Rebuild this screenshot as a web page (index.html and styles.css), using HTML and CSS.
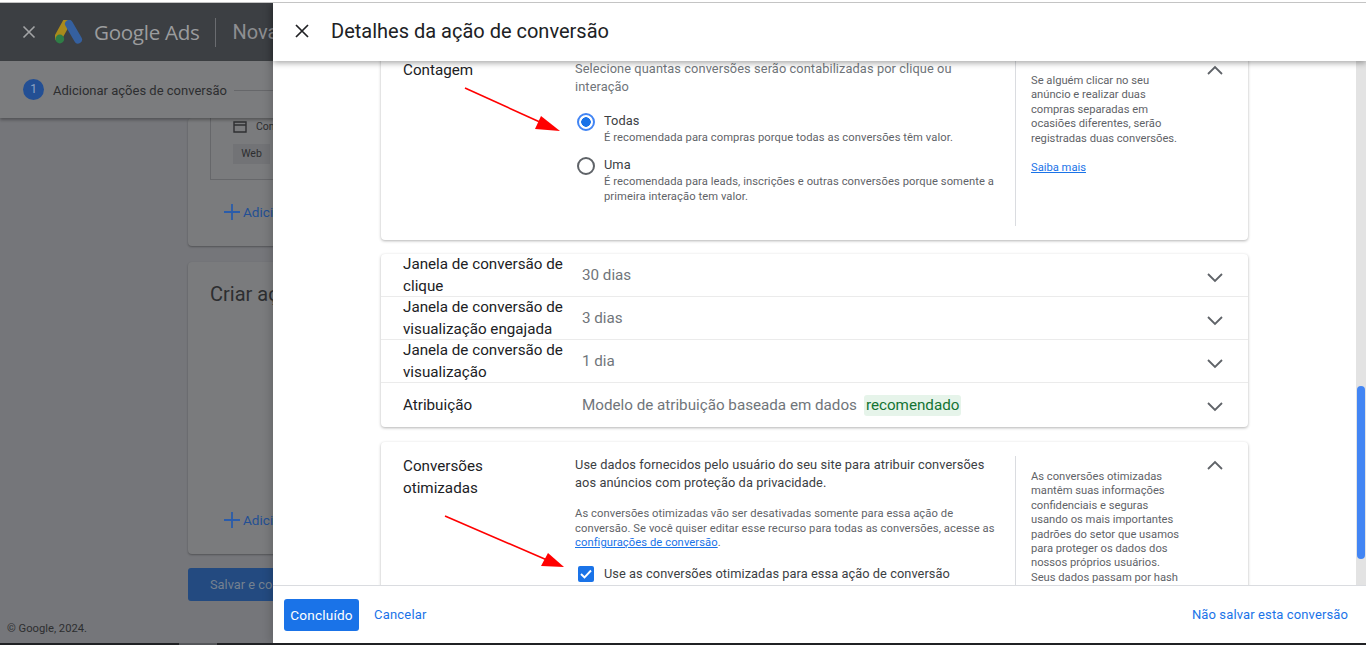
FILE: index.html
```html
<!DOCTYPE html>
<html lang="pt-BR">
<head>
    <meta charset="UTF-8">
    <title>Detalhes da ação de conversão</title>
    <link rel="stylesheet" href="styles.css">
</head>
<body>
    <div class="top-strip"></div>
    <div class="app">
        <!-- pagina escurecida atras do painel -->
        <div class="bg-page">
            <header class="bg-header">
                <svg class="bg-close" width="14" height="14" viewBox="0 0 14 14"><path d="M1.5 1.5l11 11M12.5 1.5l-11 11" stroke="#a3a4a6" stroke-width="1.6" fill="none"/></svg>
                <svg class="bg-logo" width="28" height="24" viewBox="0 0 28 24">
                    <path d="M11.5 2.5L3.5 17" stroke="#a98a1c" stroke-width="8" stroke-linecap="round" fill="none"/>
                    <path d="M14 4l9 15.5" stroke="#35609f" stroke-width="8" stroke-linecap="round" fill="none"/>
                    <circle cx="4.8" cy="19" r="4.4" fill="#2f7d46"/>
                </svg>
                <span class="bg-brand">Google Ads</span>
                <span class="bg-title">Nova ação de conversão</span>
            </header>
            <div class="bg-stepper">
                <span class="step-num">1</span>
                <span class="step-text">Adicionar ações de conversão</span>
                <span class="step-line"></span>
            </div>
            <div class="bg-content">
                <section class="bg-card bg-card-one">
                    <div class="bg-inner">
                        <div class="bg-inner-row">
                            <svg width="14" height="12" viewBox="0 0 14 12"><path d="M1 1h12v10H1zM1 4h12" stroke="#2f3032" stroke-width="1.4" fill="none"/></svg>
                            <span>Compras</span>
                        </div>
                        <span class="bg-chip">Web</span>
                    </div>
                    <div class="bg-add">
                        <svg width="16" height="16" viewBox="0 0 16 16"><path d="M8 0v16M0 8h16" stroke="#2a5cab" stroke-width="1.8" fill="none"/></svg>
                        Adicionar
                    </div>
                </section>
                <section class="bg-card bg-card-two">
                    <h3>Criar ações de conversão</h3>
                    <div class="bg-add">
                        <svg width="16" height="16" viewBox="0 0 16 16"><path d="M8 0v16M0 8h16" stroke="#2a5cab" stroke-width="1.8" fill="none"/></svg>
                        Adicionar
                    </div>
                </section>
                <div class="bg-save">Salvar e continuar</div>
            </div>
            <div class="bg-foot">© Google, 2024.</div>
        </div>

        <!-- painel lateral -->
        <aside class="panel">
            <header class="panel-head">
                <svg width="14" height="14" viewBox="0 0 14 14"><path d="M1 1l12 12M13 1L1 13" stroke="#202124" stroke-width="1.7" fill="none"/></svg>
                <h1>Detalhes da ação de conversão</h1>
            </header>
            <div class="panel-body">
                <div class="scroll">
                    <section class="card card-open card-count">
                        <h2 class="card-title">Contagem</h2>
                        <div class="card-main">
                            <p class="lead lead-muted">Selecione quantas conversões serão contabilizadas por clique ou interação</p>
                            <div class="option option-first">
                                <span class="radio radio-on"></span>
                                <div>
                                    <div class="option-name">Todas</div>
                                    <div class="option-desc">É recomendada para compras porque todas as conversões têm valor.</div>
                                </div>
                            </div>
                            <div class="option">
                                <span class="radio"></span>
                                <div>
                                    <div class="option-name">Uma</div>
                                    <div class="option-desc">É recomendada para leads, inscrições e outras conversões porque somente a primeira interação tem valor.</div>
                                </div>
                            </div>
                        </div>
                        <div class="card-help">
                            <p>Se alguém clicar no seu anúncio e realizar duas compras separadas em ocasiões diferentes, serão registradas duas conversões.</p>
                            <a href="#" class="help-link">Saiba mais</a>
                        </div>
                        <svg class="chev chev-open" width="18" height="10" viewBox="0 0 18 10"><path d="M2 9l7-7 7 7" stroke="#5f6368" stroke-width="1.8" fill="none"/></svg>
                    </section>

                    <div class="rows">
                        <div class="row">
                            <h2 class="card-title">Janela de conversão de clique</h2>
                            <span class="row-value">30 dias</span>
                            <svg class="chev" width="18" height="10" viewBox="0 0 18 10"><path d="M2 1l7 7 7-7" stroke="#5f6368" stroke-width="1.8" fill="none"/></svg>
                        </div>
                        <div class="row">
                            <h2 class="card-title">Janela de conversão de visualização engajada</h2>
                            <span class="row-value">3 dias</span>
                            <svg class="chev" width="18" height="10" viewBox="0 0 18 10"><path d="M2 1l7 7 7-7" stroke="#5f6368" stroke-width="1.8" fill="none"/></svg>
                        </div>
                        <div class="row">
                            <h2 class="card-title">Janela de conversão de visualização</h2>
                            <span class="row-value">1 dia</span>
                            <svg class="chev" width="18" height="10" viewBox="0 0 18 10"><path d="M2 1l7 7 7-7" stroke="#5f6368" stroke-width="1.8" fill="none"/></svg>
                        </div>
                        <div class="row row-last">
                            <h2 class="card-title">Atribuição</h2>
                            <span class="row-value">Modelo de atribuição baseada em dados</span>
                            <span class="tag">recomendado</span>
                            <svg class="chev" width="18" height="10" viewBox="0 0 18 10"><path d="M2 1l7 7 7-7" stroke="#5f6368" stroke-width="1.8" fill="none"/></svg>
                        </div>
                    </div>

                    <section class="card card-open card-enhanced">
                        <h2 class="card-title">Conversões otimizadas</h2>
                        <div class="card-main">
                            <p class="lead">Use dados fornecidos pelo usuário do seu site para atribuir conversões aos anúncios com proteção da privacidade.</p>
                            <p class="note">As conversões otimizadas vão ser desativadas somente para essa ação de conversão. Se você quiser editar esse recurso para todas as conversões, acesse as <a href="#" class="help-link">configurações de conversão</a>.</p>
                            <div class="check-line">
                                <span class="check">
                                    <svg width="12" height="10" viewBox="0 0 12 10"><path d="M1 5l3.5 3.5L11 1.5" stroke="#fff" stroke-width="1.9" fill="none"/></svg>
                                </span>
                                <span class="option-name">Use as conversões otimizadas para essa ação de conversão</span>
                            </div>
                        </div>
                        <div class="card-help">
                            <p>As conversões otimizadas mantêm suas informações confidenciais e seguras usando os mais importantes padrões do setor que usamos para proteger os dados dos nossos próprios usuários. Seus dados passam por hash</p>
                        </div>
                        <svg class="chev chev-open" width="18" height="10" viewBox="0 0 18 10"><path d="M2 9l7-7 7 7" stroke="#5f6368" stroke-width="1.8" fill="none"/></svg>
                    </section>
                </div>
                <div class="scrollbar"><div class="thumb"></div></div>
            </div>
            <footer class="panel-foot">
                <button class="btn-done">Concluído</button>
                <a href="#" class="foot-link">Cancelar</a>
                <a href="#" class="foot-link foot-right">Não salvar esta conversão</a>
            </footer>
        </aside>

        <!-- setas vermelhas da anotacao -->
        <svg class="arrows" width="1366" height="640" viewBox="0 0 1366 640">
            <path d="M465 85L542 120" stroke="#f00" stroke-width="1.6" fill="none"/>
            <path d="M560 128L541 113L535 126Z" fill="#f00"/>
            <path d="M445 513L547 557" stroke="#f00" stroke-width="1.6" fill="none"/>
            <path d="M564 564L548 550L541 563Z" fill="#f00"/>
        </svg>
    </div>
    <div class="bottom-strip"><span class="bottom-tab"></span></div>
</body>
</html>
```

FILE: styles.css
```css
* {
    box-sizing: border-box;
}
html, body {
    margin: 0;
    height: 645px;
    overflow: hidden;
}
body {
    font-family: Roboto, "Liberation Sans", Arial, sans-serif;
    display: flex;
    flex-direction: column;
    color: #202124;
}
h1, h2, h3, p {
    margin: 0;
    font-weight: 400;
}
.top-strip {
    height: 3px;
    background: #fff;
    border-bottom: 1px solid #c4c4c4;
}
.bottom-strip {
    height: 2px;
    background: #202124;
    padding-left: 179px;
}
.bottom-tab {
    display: block;
    width: 38px;
    height: 2px;
    background: #55575a;
}
.app {
    position: relative;
    flex: 1;
    overflow: hidden;
}

/* fundo */
.bg-page {
    height: 100%;
    background: #75767a;
}
.bg-header {
    height: 58px;
    background: #3c3f43;
    display: flex;
    align-items: center;
    padding-left: 22px;
}
.bg-close {
    margin-right: 19px;
}
.bg-logo {
    margin-right: 11px;
}
.bg-brand {
    font-family: "Open Sans", Roboto, sans-serif;
    font-size: 20.6px;
    color: #9b9c9e;
    letter-spacing: -0.3px;
    padding-right: 16px;
    border-right: 1px solid #6a6c70;
    line-height: 29px;
}
.bg-title {
    font-size: 20px;
    color: #8d8e91;
    margin-left: 16px;
    white-space: nowrap;
}
.bg-stepper {
    height: 57px;
    padding: 2px 0 0 23px;
    background: #7b7c7e;
    display: flex;
    align-items: center;
    box-shadow: 0 2px 3px #0000004d;
    position: relative;
}
.step-num {
    width: 21px;
    height: 21px;
    margin-top: -2px;
    border-radius: 50%;
    background: #234f94;
    color: #8ea3c4;
    font-size: 12px;
    text-align: center;
    line-height: 21px;
    margin-right: 9px;
}
.step-text {
    font-size: 13px;
    color: #2d2e30;
}
.step-line {
    width: 60px;
    height: 1px;
    background: #66676a;
    margin-left: 7px;
}
.bg-content {
    padding-left: 188px;
}
.bg-card {
    width: 400px;
    background: #7a7b7d;
    border-radius: 4px;
    box-shadow: 0 1px 2px #0000004d;
    padding-left: 22px;
}
.bg-card-one {
    height: 128px;
    margin-bottom: 16px;
}
.bg-card-two {
    height: 292px;
    margin-bottom: 14px;
    padding-top: 20px;
}
.bg-card-two h3 {
    font-size: 20px;
    color: #2d2e30;
    white-space: nowrap;
}
.bg-card-two .bg-add {
    margin-top: 204px;
}
.bg-inner {
    height: 62px;
    border-left: 1px solid #66676a;
    border-bottom: 1px solid #66676a;
    padding: 2px 0 0 22px;
}
.bg-inner-row {
    display: flex;
    align-items: center;
    gap: 9px;
    font-size: 10.5px;
    color: #2d2e30;
}
.bg-chip {
    display: inline-block;
    margin-top: 11px;
    width: 37px;
    height: 20px;
    background: #727376;
    font-size: 10.5px;
    line-height: 20px;
    text-align: center;
    color: #2d2e30;
}
.bg-add {
    margin: 22px 0 0 14px;
    font-size: 13.6px;
    line-height: 20px;
    color: #234f94;
    display: flex;
    align-items: center;
    gap: 3px;
}
.bg-save {
    width: 400px;
    height: 33px;
    background: #234a80;
    border-radius: 3px;
    font-size: 12.8px;
    line-height: 33px;
    padding-left: 22px;
    color: #75818f;
}
.bg-foot {
    font-size: 11.2px;
    padding: 21px 0 0 7px;
    color: #2d2e30;
}

/* painel */
.panel {
    position: absolute;
    top: 0;
    bottom: 0;
    left: 273px;
    right: 0;
    background: #fff;
    display: flex;
    flex-direction: column;
    box-shadow: -3px 0 8px #00000026;
}
.panel-head {
    height: 58px;
    flex-shrink: 0;
    display: flex;
    align-items: center;
    padding: 0 0 2px 22px;
    gap: 22px;
    background: #fff;
    box-shadow: 0 2px 6px #00000059;
    position: relative;
    z-index: 2;
}
.panel-head h1 {
    font-size: 20px;
    color: #202124;
}
.panel-body {
    flex: 1;
    min-height: 0;
    display: flex;
}
.scroll {
    flex: 1;
    min-width: 0;
    overflow: hidden;
    padding-left: 108px;
}
.scrollbar {
    width: 10px;
    background: #e3e3e3;
}
.thumb {
    margin-top: 325px;
    height: 173px;
    background: #4285f4;
    border-radius: 4px;
    margin-left: 1px;
    width: 8px;
}
.card {
    width: 867px;
    background: #fff;
    border-radius: 4px;
    box-shadow: 0 1px 3px #0000004d;
}
.card-open {
    display: flex;
}
.card-count {
    margin-top: -12px;
    height: 191px;
    padding-top: 11px;
}
.card-enhanced {
    margin-top: 15px;
    height: 300px;
    padding-top: 14px;
}
.card-title {
    width: 172px;
    margin-left: 22px;
    padding-right: 20px;
    flex-shrink: 0;
    font-size: 15.2px;
    line-height: 21.6px;
    color: #202124;
}
.card-main {
    width: 425px;
    flex-shrink: 0;
}
.lead {
    font-size: 12.8px;
    line-height: 18px;
    letter-spacing: 0.09px;
    color: #3c4043;
}
.lead-muted {
    color: #70757a;
}
.note {
    font-size: 11.2px;
    line-height: 14.6px;
    letter-spacing: 0.08px;
    color: #5f6368;
    margin-top: 15px;
}
.option {
    display: flex;
    margin-top: 11.5px;
}
.option-first {
    margin-top: 17px;
}
.option-name {
    font-size: 12.8px;
    line-height: 16px;
    color: #3c4043;
    letter-spacing: 0.06px;
}
.option-desc {
    font-size: 11.2px;
    line-height: 14.6px;
    letter-spacing: 0.08px;
    color: #5f6368;
    margin-top: 2px;
}
.radio {
    flex-shrink: 0;
    width: 18px;
    height: 18px;
    margin: 0 9px 0 2px;
    border: 2px solid #5f6368;
    border-radius: 50%;
}
.radio-on {
    border-color: #4285f4;
    background: radial-gradient(circle, #1a73e8 0 4.5px, #fff 5px);
}
.check-line {
    display: flex;
    align-items: center;
    margin-top: 15px;
}
.check {
    width: 16px;
    height: 16px;
    margin: 0 10px 0 3px;
    background: #1a73e8;
    border-radius: 2px;
    display: flex;
    align-items: center;
    justify-content: center;
}
.card-help {
    width: 172px;
    flex-shrink: 0;
    margin-left: 15px;
    padding: 14px 0 0 15px;
    border-left: 1px solid #dadce0;
    font-size: 11.2px;
    line-height: 14.4px;
    color: #5f6368;
}
.card-count .card-help {
    height: 166px;
}
.card-help p {
    width: 150px;
}
.help-link {
    color: #1a73e8;
    text-decoration: underline;
}
.card-help .help-link {
    display: block;
    margin-top: 15px;
}
.chev {
    margin-left: 19px;
}
.chev-open {
    margin-top: 4px;
}
.card-count .chev-open {
    margin-top: 5px;
}
.rows {
    width: 867px;
    margin-top: 14px;
    border-radius: 4px;
    box-shadow: 0 1px 3px #0000004d;
}
.row {
    height: 43px;
    display: flex;
    align-items: center;
    border-bottom: 1px solid #ebebeb;
    position: relative;
}
.row-last {
    height: 44px;
    border-bottom: 0;
}
.row .card-title {
    width: 179px;
    padding-right: 0;
    margin-top: 2px;
}
.row-value {
    font-size: 15.2px;
    color: #70757a;
}
.tag {
    margin-left: 7px;
    padding: 0 2px;
    font-size: 15.2px;
    line-height: 21px;
    color: #137333;
    background: #e6f4ea;
    border-radius: 3px;
}
.row .chev {
    position: absolute;
    left: 825px;
    top: 19px;
    margin-left: 0;
}

/* rodape */
.panel-foot {
    height: 58px;
    flex-shrink: 0;
    display: flex;
    align-items: center;
    padding: 0 18px 0 11px;
    background: #fff;
    border-top: 1px solid #dadce0;
    position: relative;
    z-index: 2;
}
.btn-done {
    width: 75px;
    height: 32px;
    background: #1a73e8;
    color: #fff;
    border: 0;
    border-radius: 3px;
    font-family: Roboto, sans-serif;
    font-size: 13.6px;
    letter-spacing: 0.2px;
    padding: 0;
    margin-right: 15px;
}
.foot-link {
    color: #1a73e8;
    font-size: 13px;
    letter-spacing: 0.2px;
    text-decoration: none;
}
.foot-right {
    margin-left: auto;
    letter-spacing: 0.12px;
}
.arrows {
    position: absolute;
    top: 0;
    left: 0;
    z-index: 3;
    pointer-events: none;
}
```
